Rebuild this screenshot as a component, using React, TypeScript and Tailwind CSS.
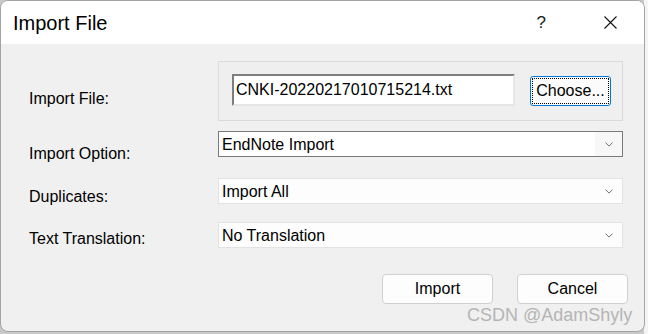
import React from "react";

const font = { fontFamily: '"Liberation Sans", Arial, sans-serif' };

function Chevron() {
  return (
    <svg width="8" height="5" viewBox="0 0 8 5" className="block">
      <path d="M0.5 0.6 L4 4.1 L7.5 0.6" fill="none" stroke="#707070" strokeWidth="1" />
    </svg>
  );
}

function Dropdown({ text, focused }: { text: string; focused?: boolean }) {
  return (
    <div
      className={
        "flex h-[26px] w-[405px] items-stretch border " +
        (focused ? "border-[#7a7a7a] bg-white" : "border-[#e3e3e3] bg-[#fdfdfd]")
      }
    >
      <div className="flex flex-1 items-center pl-[3px] pt-[1px] text-[16px] leading-[20px] text-black">{text}</div>
      <div className={"flex w-[27px] items-center justify-center pl-[1px] " + (focused ? "bg-[#f7f7f7]" : "")}>
        <Chevron />
      </div>
    </div>
  );
}

export default function App() {
  return (
    <div className="relative h-[334px] w-[648px] overflow-hidden bg-[#c9c9c9]" style={font}>
      <div className="absolute right-0 top-0 h-[334px] w-[4px] bg-[#f4f4f4]" />
      <div className="relative flex h-[332px] w-[645px] flex-col overflow-hidden rounded-[8px] border border-[#a3a3a3] bg-[#f0f0f0]">
        {/* title bar */}
        <div className="flex h-[43px] shrink-0 items-center bg-white pl-[12px] pr-[27px]">
          <div className="text-[20px] leading-[24px] text-black">Import File</div>
          <div className="ml-auto text-[17px] leading-[20px] text-[#1a1a1a]">?</div>
          <svg width="13" height="13" viewBox="0 0 13 13" className="ml-[58px] block">
            <path d="M0.5 0.5 L12.5 12.5 M12.5 0.5 L0.5 12.5" stroke="#111" strokeWidth="1.1" fill="none" />
          </svg>
        </div>

        {/* body */}
        <div className="flex flex-1 flex-col pt-[17px] text-[16px] leading-[20px] text-black">
          {/* row 1 */}
          <div className="flex h-[60px] items-start">
            <div className="w-[217px] pl-[28px] pt-[28px]">Import File:</div>
            <div className="flex h-[60px] w-[405px] items-start border border-[#dadada] bg-[#efefef] pl-[13px] pt-[12px]">
              <div className="flex h-[32px] w-[283px] items-center border-b-[2px] border-l-[2px] border-r-[2px] border-t-[2px] border-b-[#e6e6e6] border-l-[#7e7e7e] border-r-[#e6e6e6] border-t-[#7e7e7e] bg-white pl-[2px]">
                CNKI-20220217010715214.txt
              </div>
              <div className="ml-[15px] mt-[2px] flex h-[30px] w-[81px] items-center justify-center rounded-[3px] border border-[#0078d7] bg-[#fbfbfb] p-[1px]">
                <div className="flex h-full w-full items-center justify-center border border-dotted border-black">
                  Choose...
                </div>
              </div>
            </div>
          </div>

          {/* row 2 */}
          <div className="mt-[10px] flex h-[26px] items-start">
            <div className="w-[217px] pl-[28px] pt-[13px]">Import Option:</div>
            <Dropdown text="EndNote Import" focused />
          </div>

          {/* row 3 */}
          <div className="mt-[21px] flex h-[26px] items-start">
            <div className="w-[217px] pl-[28px] pt-[9px]">Duplicates:</div>
            <Dropdown text="Import All" />
          </div>

          {/* row 4 */}
          <div className="mt-[18px] flex h-[26px] items-start">
            <div className="w-[217px] pl-[28px] pt-[7px]">Text Translation:</div>
            <Dropdown text="No Translation" />
          </div>

          {/* buttons */}
          <div className="mt-[26px] flex justify-end gap-[24px] pr-[16px]">
            <div className="flex h-[30px] w-[111px] items-center justify-center rounded-[4px] border border-[#d0d0d0] bg-[#fdfdfd]">
              Import
            </div>
            <div className="flex h-[30px] w-[111px] items-center justify-center rounded-[4px] border border-[#d0d0d0] bg-[#fdfdfd]">
              Cancel
            </div>
          </div>
        </div>

        <div className="absolute left-[466px] top-[303px] text-[18px] leading-[22px] text-[#b5b5b5]">CSDN @AdamShyly</div>
      </div>
    </div>
  );
}
